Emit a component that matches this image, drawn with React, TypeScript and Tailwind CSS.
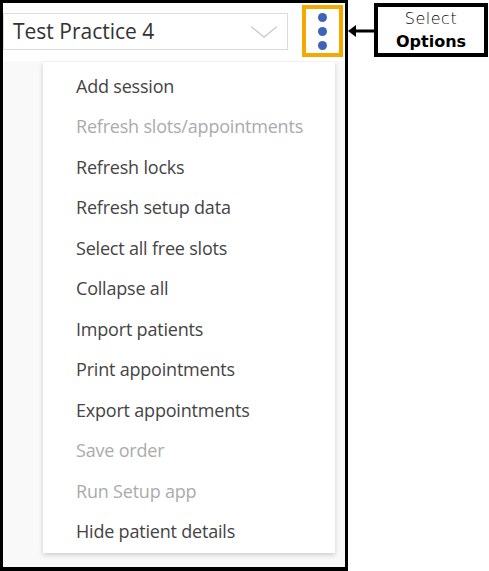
import React from 'react';

const items: { label: string; disabled?: boolean }[] = [
	{ label: 'Add session' },
	{ label: 'Refresh slots/appointments', disabled: true },
	{ label: 'Refresh locks' },
	{ label: 'Refresh setup data' },
	{ label: 'Select all free slots' },
	{ label: 'Collapse all' },
	{ label: 'Import patients' },
	{ label: 'Print appointments' },
	{ label: 'Export appointments' },
	{ label: 'Save order', disabled: true },
	{ label: 'Run Setup app', disabled: true },
	{ label: 'Hide patient details' },
];

export default function App() {
	return (
		<div className="flex w-[489px] h-[571px] bg-white items-start">
			{/* screenshot frame */}
			<div className="w-[348px] h-[571px] border-l-[3px] border-t-[3px] border-r-[3px] border-b-[4px] border-black flex flex-col bg-white">
				<div className="h-[58px] flex items-start">
					<div className="mt-[10px] w-[285px] h-[37px] border border-[#dcdcdc] flex items-center justify-between pl-[9px] pr-[9px]">
						<span className="text-[21px] text-[#333] font-['Open_Sans',sans-serif] leading-none">Test Practice 4</span>
						<svg width="28" height="14" viewBox="0 0 28 14" className="mt-[1px]">
							<path d="M1 1.5 L14 12 L27 1.5" fill="none" stroke="#cccccc" strokeWidth="1.4" />
						</svg>
					</div>
					<div className="ml-[14px] mt-[2px] w-[41px] h-[52px] border-[4px] border-[#f5a800] flex flex-col items-center justify-center gap-[5px]">
						<span className="block w-[9px] h-[9px] rounded-full bg-[#3f63b8]" />
						<span className="block w-[9px] h-[9px] rounded-full bg-[#3f63b8]" />
						<span className="block w-[9px] h-[9px] rounded-full bg-[#3f63b8]" />
					</div>
				</div>
				<div className="flex-1 bg-[#f9f9f9] pl-[40px] pt-[1px]">
					<div className="w-[292px] h-[491px] bg-white shadow-[0_2px_5px_rgba(0,0,0,0.18)] pt-[4px]">
						{items.map((it) => (
							<div
								key={it.label}
								className={`h-[40.5px] flex items-center pl-[33px] text-[18px] font-['Open_Sans',sans-serif] tracking-[-0.2px] ${
									it.disabled ? 'text-[#ababab]' : 'text-[#444]'
								}`}
							>
								{it.label}
							</div>
						))}
					</div>
				</div>
			</div>

			{/* annotation */}
			<div className="flex items-start">
				<svg width="26" height="14" viewBox="0 0 26 14" className="mt-[24px]">
					<path d="M0 7 L8 1 L8 13 Z" fill="#000" />
					<rect x="7" y="5.5" width="19" height="3" fill="#000" />
				</svg>
				<div className="mt-[3px] w-[114px] h-[54px] border-[4px] border-black flex flex-col items-center justify-center font-['DejaVu_Sans',sans-serif] text-[16px] leading-[23px] text-black">
					<span className="font-light tracking-[0.5px] text-black">Select</span>
					<span className="font-bold">Options</span>
				</div>
			</div>
		</div>
	);
}
